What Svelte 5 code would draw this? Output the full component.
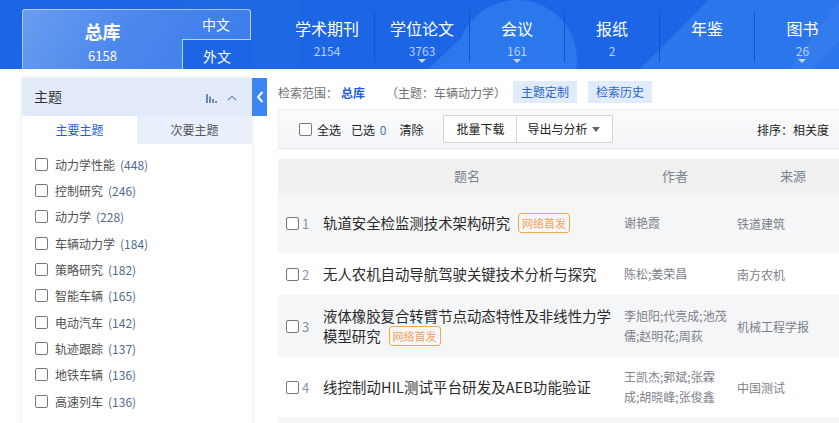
<script>
  const navs = [
    { name: '学术期刊', count: '2154' },
    { name: '学位论文', count: '3763', arrow: true },
    { name: '会议', count: '161', arrow: true },
    { name: '报纸', count: '2' },
    { name: '年鉴', count: '' },
    { name: '图书', count: '26', arrow: true }
  ];
  const topics = [
    ['动力学性能', 448], ['控制研究', 246], ['动力学', 228], ['车辆动力学', 184], ['策略研究', 182],
    ['智能车辆', 165], ['电动汽车', 142], ['轨迹跟踪', 137], ['地铁车辆', 136], ['高速列车', 136]
  ];
  const rows = [
    { title: '轨道安全检监测技术架构研究', first: true, author: '谢艳霞', source: '铁道建筑', cls: 'r1' },
    { title: '无人农机自动导航驾驶关键技术分析与探究', author: '陈松;姜荣昌', source: '南方农机', cls: 'r2' },
    { title: '液体橡胶复合转臂节点动态特性及非线性力学模型研究', first: true, author: '李旭阳;代亮成;池茂儒;赵明花;周荻', source: '机械工程学报', cls: 'r3' },
    { title: '线控制动HIL测试平台研发及AEB功能验证', author: '王凯杰;郭斌;张霖成;胡晓峰;张俊鑫', source: '中国测试', cls: 'r4' }
  ];
</script>

<div class="page">
  <header class="top">
    <div class="deco d1"></div>
    <div class="deco d2"></div>
    <div class="deco d3"></div>
    <div class="deco d4"></div>
    <div class="deco d5"></div>
    <div class="db">
      <div class="total">
        <div class="total-name">总库</div>
        <div class="total-count">6158</div>
      </div>
      <div class="langs">
        <div class="lang zh">中文</div>
        <div class="lang en">外文</div>
      </div>
    </div>
    <nav class="nav">
      {#each navs as n}
        <div class="nav-item">
          <div class="nav-name">{n.name}</div>
          <div class="nav-count">{n.count}</div>
          {#if n.arrow}<span class="nav-arrow"></span>{/if}
        </div>
      {/each}
    </nav>
  </header>

  <div class="body">
    <aside class="side">
      <div class="side-head">
        <span class="side-title">主题</span>
        <svg class="bars" width="11" height="9" viewBox="0 0 11 9"><path d="M0 0h2v9H0zM3 2.500h2V9H3zM6 5h2v4H6zM9 7h2v2H9z" fill="#6f88b8"/></svg>
        <svg class="chev" width="10" height="6" viewBox="0 0 10 6"><path d="M.7 5.300L5 1.200l4.300 4.100" fill="none" stroke="#7f95c0" stroke-width="1.300"/></svg>
      </div>
      <div class="tabs">
        <div class="tab on">主要主题</div>
        <div class="tab">次要主题</div>
      </div>
      <ul class="topics">
        {#each topics as t}
          <li><span class="box"></span><span class="t-name">{t[0]}</span><span class="t-num">({t[1]})</span></li>
        {/each}
      </ul>
    </aside>

    <button class="collapse" aria-label="收起">
      <svg width="8" height="12" viewBox="0 0 8 12"><path d="M6.500 1L2 6l4.500 5" fill="none" stroke="#fff" stroke-width="2"/></svg>
    </button>

    <main class="main">
      <div class="scope">
        <span class="s-label">检索范围：</span>
        <b class="s-db">总库</b>
        <span class="s-q">（主题：车辆动力学）</span>
        <span class="chip c1">主题定制</span>
        <span class="chip">检索历史</span>
      </div>

      <div class="toolbar">
        <span class="box"></span>
        <span class="tb-all">全选</span>
        <span class="tb-sel">已选 <em>0</em></span>
        <span class="tb-clear">清除</span>
        <span class="btn b1">批量下载</span>
        <span class="btn b2">导出与分析<i class="caret"></i></span>
        <span class="sort">排序：相关度</span>
      </div>

      <div class="thead">
        <span>题名</span><span>作者</span><span>来源</span>
      </div>

      {#each rows as r, i}
        <div class="row {r.cls}">
          <div class="idx"><span class="box"></span><span class="no">{i + 1}</span></div>
          <div class="title">{r.title}{#if r.first}<span class="tag">网络首发</span>{/if}</div>
          <div class="author">{r.author}</div>
          <div class="source">{r.source}</div>
        </div>
      {/each}
      <div class="row-rest"></div>
    </main>
  </div>
</div>

<style>
  :global(body) { margin: 0; background: #fff; overflow: hidden; }
  .page { width: 839px; height: 423px; overflow: hidden; font-family: "Noto Sans CJK SC", "Noto Sans", sans-serif; color: #333; }
  .top { position: relative; height: 69px; background: #1c65e4; overflow: hidden; display: flex; padding-left: 22px; box-sizing: border-box; }
  .deco { position: absolute; }
  .d1 { left: 0; top: 0; width: 300px; height: 69px; background: linear-gradient(135deg, #1c65e4 0 50%, #2069e6 50%); opacity: .5; }
  .d2 { left: 457px; top: 0; width: 120px; height: 120px; border-radius: 50%; background: #2a78ec; }
  .d3 { left: 640px; top: 0; width: 260px; height: 69px; background: #2b76ea; clip-path: polygon(68px 0, 100% 0, 100% 100%, 0 100%); }
  .d4 { left: 790px; top: 0; width: 60px; height: 69px; background: #3a82ef; clip-path: polygon(50px 0, 60px 0, 60px 30px, 22px 69px, 0 69px); opacity: .55; }
  .d5 { left: 420px; top: 0; width: 80px; height: 69px; background: #2a78ec; clip-path: polygon(60px 20px, 60px 69px, 8px 69px); }

  .db { position: relative; flex: none; width: 229px; height: 60px; margin-top: 9px; display: flex; border: 1px solid rgba(255,255,255,.55); border-bottom: 0; border-radius: 3px 3px 0 0; box-sizing: border-box; background: linear-gradient(120deg, #6a9df0 0%, #4b87ec 45%, #3b7cea 100%); }
  .total { width: 159px; flex: none; text-align: center; color: #fff; }
  .total-name { font-size: 18px; font-weight: 700; line-height: 24px; margin-top: 9px; }
  .total-count { font-size: 13px; line-height: 18px; margin-top: 4px; }
  .langs { flex: 1; display: flex; flex-direction: column; color: #fff; font-size: 14px; text-align: center; }
  .lang.zh { height: 30px; line-height: 29px; }
  .lang.en { flex: 1; background: #1c65e4; border-top: 1px solid rgba(255,255,255,.7); border-left: 1px solid rgba(255,255,255,.7); line-height: 32px; margin-right: -1px; }

  .nav { position: relative; flex: none; display: flex; margin-left: 29px; }
  .nav-item { position: relative; width: 95px; height: 51px; margin-top: 11px; text-align: center; color: #fff; border-right: 1px solid #0f55d3; box-sizing: border-box; }
  .nav-item:last-child { border-right: 0; }
  .nav-name { font-size: 16px; line-height: 22px; margin-top: 6px; }
  .nav-count { font-size: 12px; line-height: 16px; margin-top: 4px; color: #b9d2fb; }
  .nav-arrow { position: absolute; left: 43px; top: 48px; border: 4px solid transparent; border-top-color: #c3d8fb; border-bottom: 0; }

  .body { display: flex; height: 354px; padding: 9px 0 0 22px; box-sizing: border-box; }
  .side { width: 230px; flex: none; box-shadow: 0 0 4px rgba(0,0,0,.12); height: 360px; }
  .side-head { height: 38px; background: #e3ebfb; display: flex; align-items: center; padding: 0 15px 0 12px; }
  .side-title { flex: 1; font-size: 14px; color: #333; margin-bottom: 2px; }
  .bars { margin: 2px 10px 0 0; }
  .chev { margin-top: 2px; }
  .tabs { display: flex; height: 28px; }
  .tab { flex: 1; text-align: center; font-size: 12px; line-height: 28px; background: #e9f0fc; color: #555; }
  .tab.on { flex: none; width: 115px; background: #fff; color: #1f5fd6; }
  .topics { list-style: none; margin: 0; padding: 7px 0 0 13px; }
  .topics li { display: flex; align-items: center; height: 26.33px; font-size: 12px; color: #505050; }
  .box { display: inline-block; width: 13px; height: 13px; box-sizing: border-box; border: 1px solid #777; border-radius: 2px; background: #fff; flex: none; }
  .t-name { margin-left: 7px; }
  .t-num { margin-left: 5px; color: #4f6a92; }

  .collapse { flex: none; width: 15px; height: 38px; padding: 0; border: 0; background: #3b86f2; display: flex; align-items: center; justify-content: center; }

  .main { flex: 1; margin-left: 11px; min-width: 0; }
  .scope { display: flex; align-items: center; height: 22px; margin-top: 3px; font-size: 12px; color: #707070; white-space: nowrap; }
  .s-label { width: 60px; flex: none; }
  .s-db { color: #1f5fd6; margin-left: 3px; font-weight: 700; }
  .s-q { margin-left: 21px; width: 120px; flex: none; }
  .chip { background: #e0ebfc; color: #2c66c8; height: 22px; line-height: 22px; padding: 0 8px; }
  .chip.c1 { margin-left: 7px; margin-right: 11px; }
  .toolbar { display: flex; align-items: center; height: 40px; margin-top: 6px; box-sizing: border-box; padding-left: 20px; border-top: 1px solid #eceef0; border-bottom: 1px solid #dfe2e6; border-left: 1px solid #eceef0; background: linear-gradient(#fafbfc, #f3f5f8); font-size: 12px; color: #222; white-space: nowrap; }
  .tb-all { margin-left: 5px; }
  .tb-sel { margin-left: 10px; }
  .tb-sel em { font-style: normal; color: #4c72b8; margin-left: 2px; }
  .tb-clear { margin-left: 13px; }
  .btn { height: 28px; line-height: 26px; box-sizing: border-box; border: 1px solid #d4d4d4; background: #fff; text-align: center; }
  .b1 { margin-left: 20px; width: 74px; }
  .b2 { width: 96px; border-left: 0; padding-right: 2px; }
  .caret { display: inline-block; margin-left: 5px; vertical-align: 2px; border: 4px solid transparent; border-top: 5px solid #666; border-bottom: 0; }
  .sort { margin-left: auto; margin-right: 10px; }

  .thead { display: grid; grid-template-columns: 366px 68px 1fr; height: 34px; margin-top: 10px; background: #f0f0f0; line-height: 34px; font-size: 13px; color: #7a8492; box-sizing: border-box; }
  .thead span:nth-child(1) { padding-left: 176px; }
  .thead span:nth-child(2) { padding-left: 18px; }
  .thead span:nth-child(3) { padding-left: 68px; }

  .row { display: grid; grid-template-columns: 45px 301px 113px 1fr; align-items: center; font-size: 14.400px; }
  .r1 { height: 60px; background: #f5f6f8; }
  .r2 { height: 42px; }
  .r3 { height: 62px; background: #f5f6f8; }
  .r4 { height: 60px; }
  .r4 .title { letter-spacing: .14px; }
  .row-rest { height: 10px; background: #f5f6f8; }
  .idx { display: flex; align-items: center; padding-left: 8px; }
  .no { margin-left: 3px; font-size: 13px; color: #8a93a6; }
  .title { color: #2a2a2a; line-height: 20px; }
  .tag { display: inline-block; margin-left: 8px; height: 20px; line-height: 18px; padding: 0 3px; box-sizing: border-box; border: 1px solid #f2a94e; border-radius: 3px; color: #f2a15c; font-size: 11px; vertical-align: top; }
  .author { font-size: 12px; line-height: 20px; color: #7b7f88; padding-right: 8px; }
  .source { font-size: 12px; color: #7b7f88; white-space: nowrap; }
</style>
